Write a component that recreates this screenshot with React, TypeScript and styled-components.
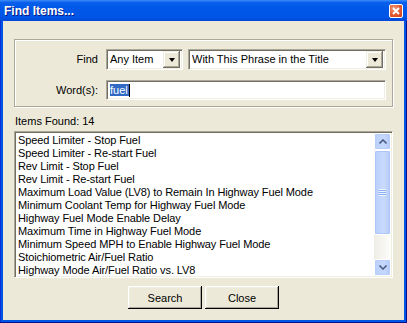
import React from "react";
import styled, { createGlobalStyle } from "styled-components";

const Global = createGlobalStyle`
  html, body { margin: 0; padding: 0; background: #ECE9D8; }
  * { box-sizing: border-box; }
  body { font-family: "Liberation Sans", Arial, sans-serif; font-size: 11px; color: #000; }
`;

const Window = styled.div`
  width: 407px;
  height: 323px;
  display: flex;
  flex-direction: column;
  background: #0055E5;
  box-shadow: inset -1px -1px #00138C, inset 1px 0 #0831D9;
`;

const TitleBar = styled.div`
  height: 21px;
  flex: none;
  display: flex;
  align-items: center;
  justify-content: space-between;
  padding: 0 4px 0 4px;
  background: linear-gradient(to bottom, #3C8DF8 0%, #0A5FEC 12%, #0058E8 40%, #0055E5 80%, #0047D8 100%);
`;

const Title = styled.span`
  color: #fff;
  font-weight: bold;
  font-size: 12px;
  text-shadow: 1px 1px #0A1883;
`;

const CloseBtn = styled.div`
  width: 14px;
  height: 14px;
  display: flex;
  align-items: center;
  justify-content: center;
  border: 1px solid #fff;
  border-radius: 2px;
  background: radial-gradient(circle at 35% 30%, #F09C80 0%, #E2582F 55%, #C6401C 100%);
`;

const Client = styled.div`
  flex: 1;
  margin: 0 3px 3px 3px;
  background: #ECE9D8;
  display: flex;
  flex-direction: column;
  padding: 18px 11px 0 11px;
`;

const GroupBox = styled.div`
  height: 68px;
  border: 1px solid #ACA899;
  box-shadow: inset 1px 1px #fff, 1px 1px #fff;
  padding: 9px 6px 0 1px;
  display: flex;
  flex-direction: column;
  gap: 10px;
`;

const Row = styled.div`
  display: flex;
  align-items: center;
  gap: 5px;
`;

const Label = styled.div`
  width: 82px;
  text-align: right;
  margin-right: 3px;
  line-height: 13px;
`;

const Sunken = styled.div<{ $w?: number; $h: number }>`
  position: relative;
  height: ${(p) => p.$h}px;
  ${(p) => (p.$w ? `width: ${p.$w}px; flex: none;` : `flex: 1;`)}
  background: #fff;
  border-style: solid;
  border-width: 1px;
  border-color: #ACA899 #fff #fff #ACA899;
  box-shadow: inset 1px 1px #716F64, inset -1px -1px #F1EFE2;
  display: flex;
  align-items: center;
  padding: 0 2px 0 3px;
`;

const ComboText = styled.span`
  flex: 1;
  line-height: 13px;
  white-space: nowrap;
  overflow: hidden;
`;

const DropBtn = styled.div`
  width: 17px;
  height: 17px;
  flex: none;
  background: #ECE9D8;
  box-shadow: inset -1px -1px #716F64, inset 1px 1px #F1EFE2, inset -2px -2px #ACA899, inset 2px 2px #fff;
  display: flex;
  align-items: center;
  justify-content: center;
`;

const Arrow = styled.div`
  width: 0;
  height: 0;
  border-left: 3.5px solid transparent;
  border-right: 3.5px solid transparent;
  border-top: 4px solid #000;
  margin-top: 1px;
`;

const Selected = styled.span`
  background: #316AC5;
  color: #fff;
  line-height: 13px;
  padding: 0 1px 0 0;
`;

const Caret = styled.span`
  display: inline-block;
  width: 1px;
  height: 13px;
  background: #000;
  vertical-align: top;
`;

const ItemsFound = styled.div`
  margin: 8px 0 3px 1px;
  line-height: 13px;
  height: 13px;
`;

const ListBox = styled.div`
  height: 147px;
  background: #fff;
  border-style: solid;
  border-width: 1px;
  border-color: #ACA899 #fff #fff #ACA899;
  box-shadow: inset 1px 1px #716F64, inset -1px -1px #F1EFE2;
  padding: 1px;
  display: flex;
`;

const Items = styled.div`
  flex: 1;
  padding: 1px 0 0 2px;
  overflow: hidden;
`;

const Item = styled.div`
  line-height: 13px;
  height: 13px;
  white-space: nowrap;
  letter-spacing: -0.1px;
`;

const ScrollBar = styled.div`
  width: 17px;
  flex: none;
  display: flex;
  flex-direction: column;
  background: linear-gradient(to right, #EEEDE5, #FDFDFA);
`;

const ScrollBtn = styled.div`
  height: 17px;
  flex: none;
  border: 1px solid #fff;
  border-radius: 2px;
  background: linear-gradient(to right, #B9D0FB, #C7D8FD 60%, #B2C9F7);
  box-shadow: inset 0 0 0 1px #B8CDF9;
  display: flex;
  align-items: center;
  justify-content: center;
`;

const Thumb = styled.div`
  height: 85px;
  flex: none;
  border: 1px solid #fff;
  border-radius: 2px;
  background: linear-gradient(to right, #B9D0FB, #C9DAFD 60%, #B4CBF8);
  box-shadow: inset 0 0 0 1px #ADC5F8;
  display: flex;
  align-items: center;
  justify-content: center;
`;

const Track = styled.div`
  flex: 1;
`;

const Grip = styled.div`
  width: 7px;
  height: 7px;
  background: repeating-linear-gradient(to bottom, #EEF4FE 0 1px, #8CB0F8 1px 2px);
`;

const ButtonRow = styled.div`
  display: flex;
  justify-content: center;
  gap: 3px;
  margin-top: 8px;
`;

const Button = styled.div`
  width: 74px;
  height: 23px;
  display: flex;
  align-items: center;
  justify-content: center;
  background: #ECE9D8;
  box-shadow: inset -1px -1px #000, inset 1px 1px #fff, inset -2px -2px #ACA899, inset 2px 2px #F1EFE2;
`;

const items = [
  "Speed Limiter - Stop Fuel",
  "Speed Limiter - Re-start Fuel",
  "Rev Limit - Stop Fuel",
  "Rev Limit - Re-start Fuel",
  "Maximum Load Value (LV8) to Remain In Highway Fuel Mode",
  "Minimum Coolant Temp for Highway Fuel Mode",
  "Highway Fuel Mode Enable Delay",
  "Maximum Time in Highway Fuel Mode",
  "Minimum Speed MPH to Enable Highway Fuel Mode",
  "Stoichiometric Air/Fuel Ratio",
  "Highway Mode Air/Fuel Ratio vs. LV8",
];

const Chevron = ({ up }: { up?: boolean }) => (
  <svg width="8" height="5" viewBox="0 0 8 5">
    <path
      d={up ? "M0.5 4.5 L4 1 L7.5 4.5" : "M0.5 0.5 L4 4 L7.5 0.5"}
      fill="none"
      stroke="#4D6185"
      strokeWidth="1.6"
    />
  </svg>
);

export default function App() {
  return (
    <>
      <Global />
      <Window>
        <TitleBar>
          <Title>Find Items...</Title>
          <CloseBtn>
            <svg width="8" height="8" viewBox="0 0 8 8">
              <path d="M1 1 L7 7 M7 1 L1 7" stroke="#fff" strokeWidth="1.8" />
            </svg>
          </CloseBtn>
        </TitleBar>
        <Client>
          <GroupBox>
            <Row>
              <Label>Find</Label>
              <Sunken $w={77} $h={21}>
                <ComboText>Any Item</ComboText>
                <DropBtn>
                  <Arrow />
                </DropBtn>
              </Sunken>
              <Sunken $h={21}>
                <ComboText>With This Phrase in the Title</ComboText>
                <DropBtn>
                  <Arrow />
                </DropBtn>
              </Sunken>
            </Row>
            <Row>
              <Label>Word(s):</Label>
              <Sunken $h={20}>
                <ComboText>
                  <Selected>fuel</Selected>
                  <Caret />
                </ComboText>
              </Sunken>
            </Row>
          </GroupBox>
          <ItemsFound>Items Found: 14</ItemsFound>
          <ListBox>
            <Items>
              {items.map((t) => (
                <Item key={t}>{t}</Item>
              ))}
            </Items>
            <ScrollBar>
              <ScrollBtn>
                <Chevron up />
              </ScrollBtn>
              <Thumb>
                <Grip />
              </Thumb>
              <Track />
              <ScrollBtn>
                <Chevron />
              </ScrollBtn>
            </ScrollBar>
          </ListBox>
          <ButtonRow>
            <Button>Search</Button>
            <Button>Close</Button>
          </ButtonRow>
        </Client>
      </Window>
    </>
  );
}
